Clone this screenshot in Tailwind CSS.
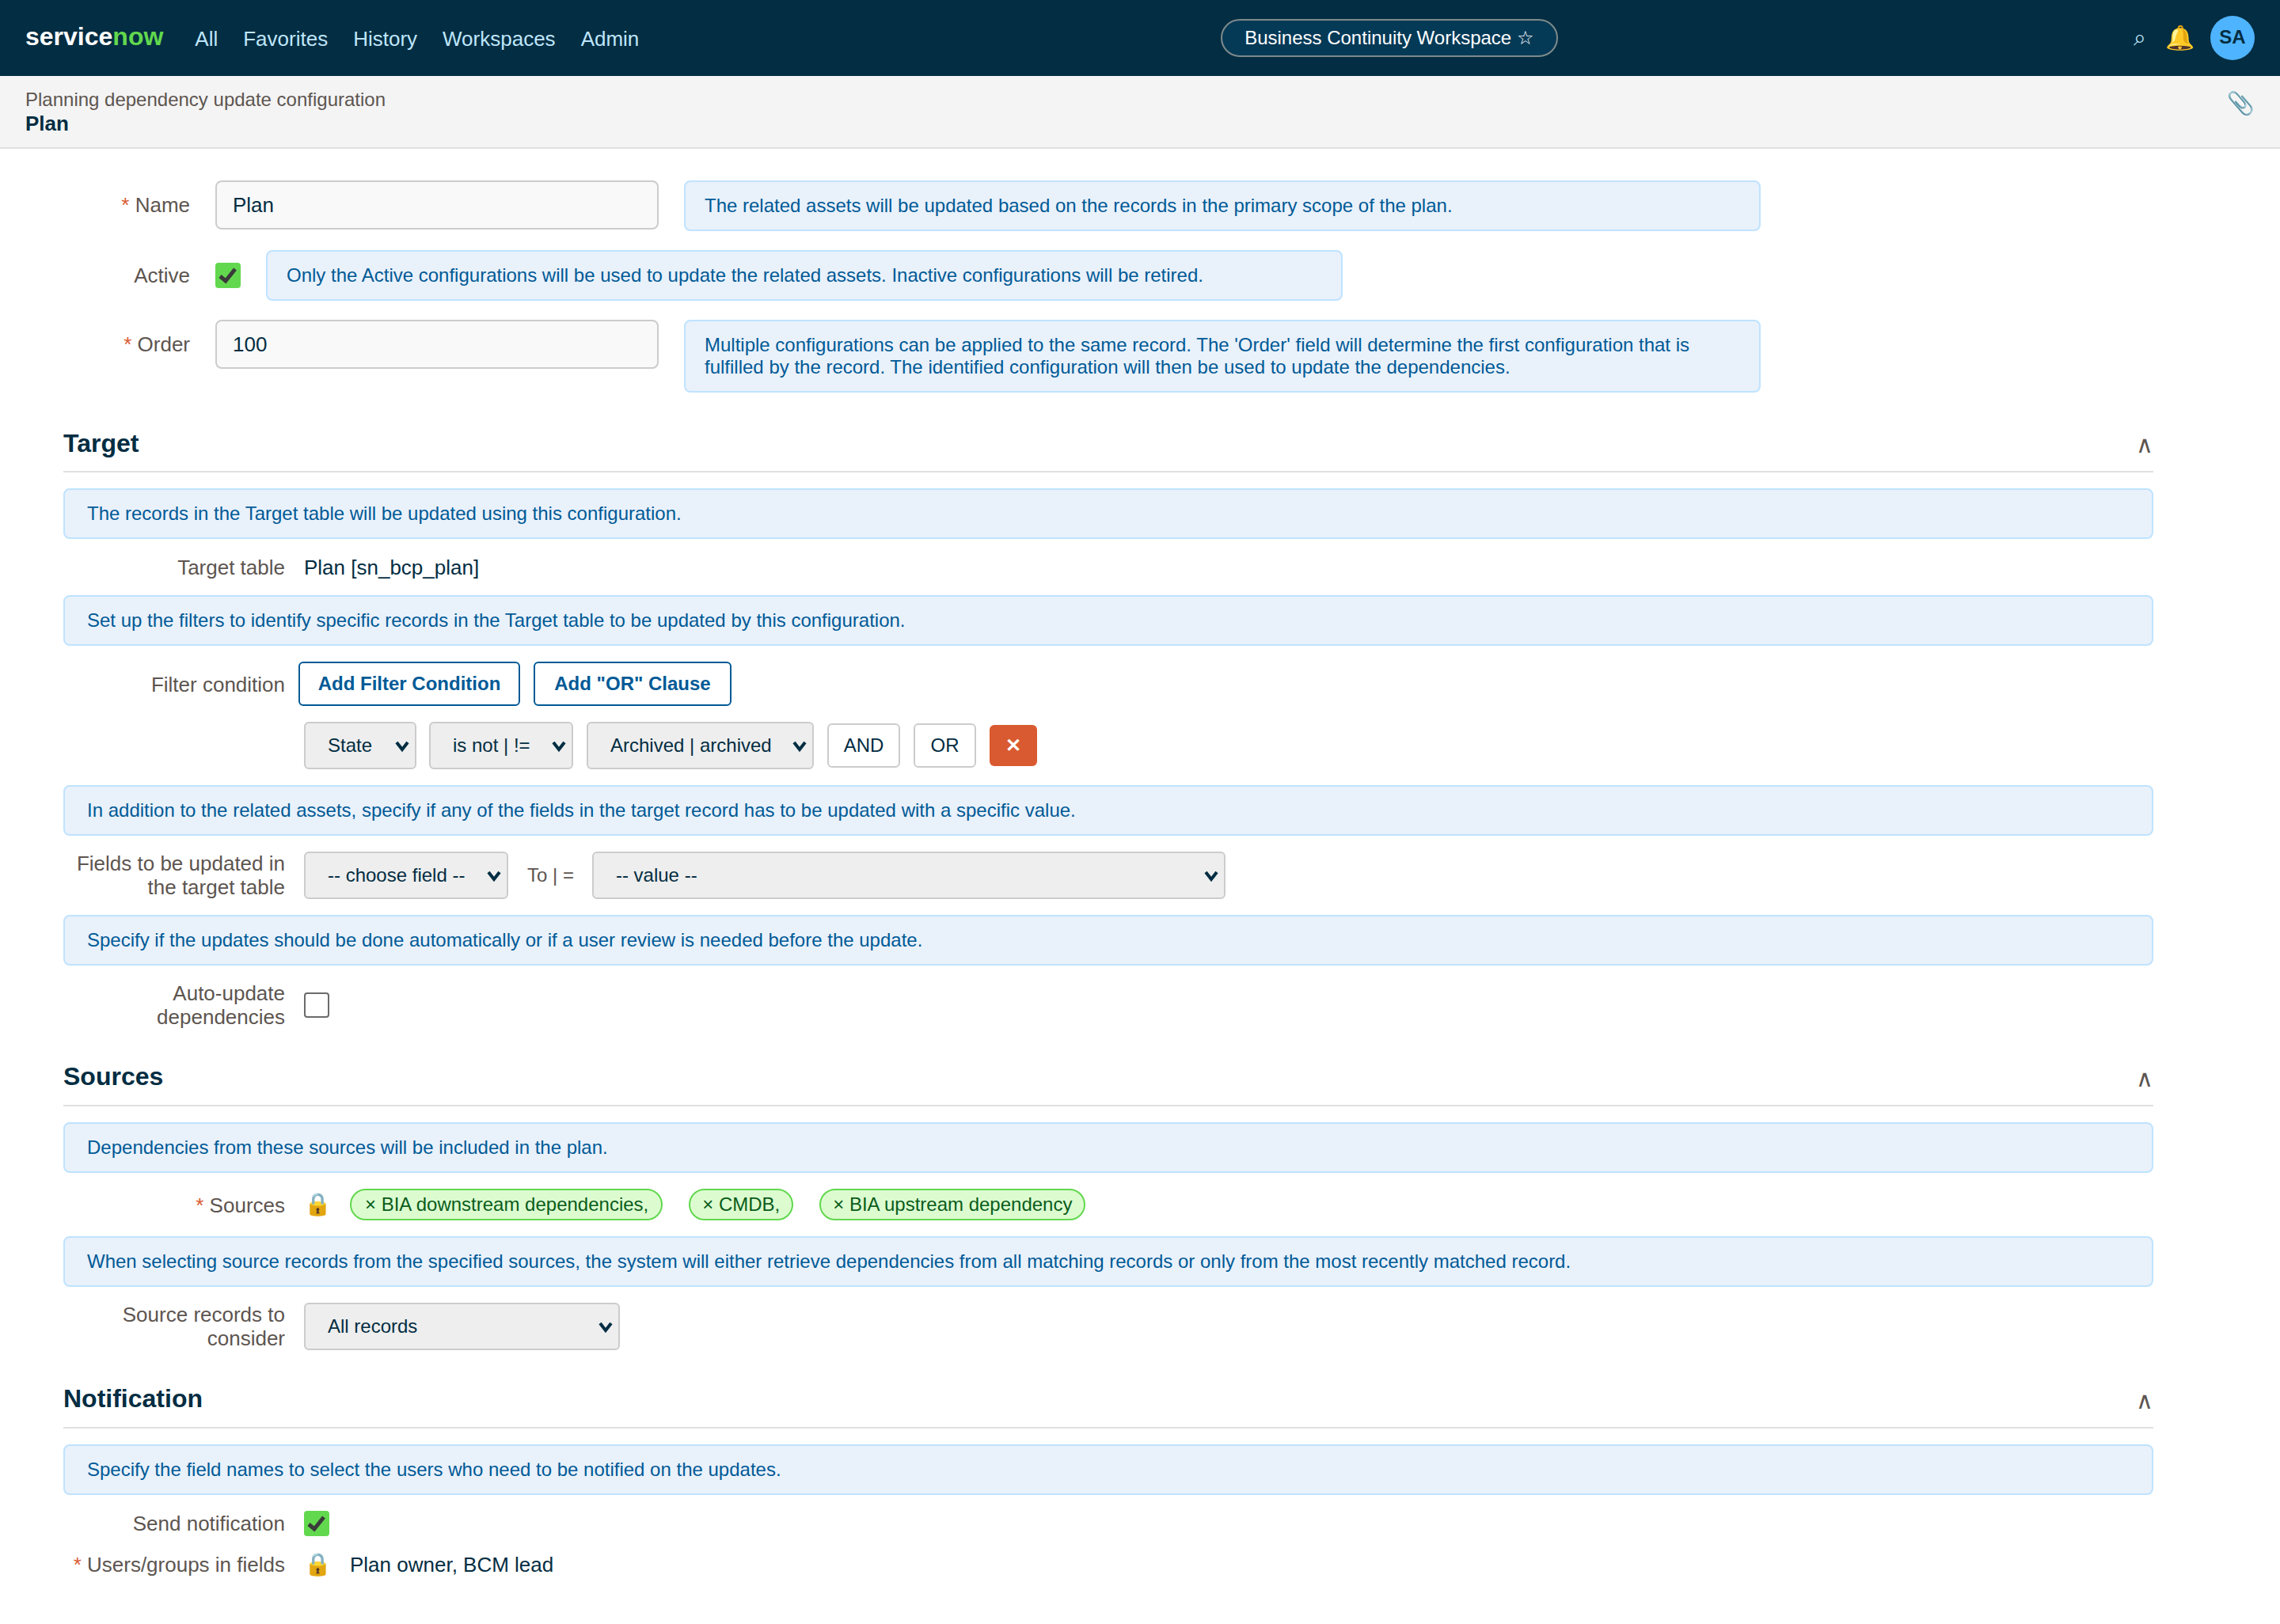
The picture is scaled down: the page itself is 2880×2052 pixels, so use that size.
<!DOCTYPE html>
<html lang="en">
  <head>
    <meta charset="UTF-8" />
    <title>Planning dependency update configuration</title>
    <script src="https://cdn.jsdelivr.net/npm/@tailwindcss/browser@4"></script>
  </head>
  <body class="bg-white font-['Liberation_Sans',sans-serif] text-[26px] leading-[30px] text-[#032d42]">
    <!-- Top bar -->
    <header class="h-[96px] bg-[#032d42] flex items-center pl-[32px] pr-[32px] relative">
      <div class="text-[32px] font-bold text-white mr-[40px] -mt-[4px]">service<span class="text-[#62d84e]">now</span></div>
      <nav class="flex gap-[32px] text-[26px] text-[#bee6fb] mt-[2px]">
        <a>All</a>
        <a>Favorites</a>
        <a>History</a>
        <a>Workspaces</a>
        <a>Admin</a>
      </nav>
      <div class="absolute left-[1542px] top-[24px] h-[48px] w-[426px] flex items-center justify-center rounded-full border-2 border-[#7f8a8c] bg-[#053a57] text-white text-[24px]">Business Continuity Workspace ☆</div>
      <div class="ml-auto flex items-center">
        <span class="text-[#bee6fb] text-[28px] mr-[24px]">⌕</span>
        <span class="text-[30px] mr-[20px]">🔔</span>
        <div class="w-[56px] h-[56px] rounded-full bg-[#4fb4ff] flex items-center justify-center font-bold text-[24px] pb-[2px]">SA</div>
      </div>
    </header>

    <!-- Record title -->
    <div class="h-[92px] bg-[#f4f4f4] border-b-2 border-[#e0e0e0] px-[32px] pt-[15px] flex justify-between">
      <div>
        <div class="text-[24px] text-[#5d5550]">Planning dependency update configuration</div>
        <div class="font-bold text-[26px]">Plan</div>
      </div>
      <span class="text-[28px] mt-[5px]">📎</span>
    </div>

    <main class="px-[80px] pt-[40px] w-[2800px]">
      <!-- Main fields -->
      <div class="flex flex-col gap-[24px]">
        <div class="flex items-start">
          <label class="w-[160px] text-right text-[#5d5550] mr-[32px] mt-[16px]"><span class="text-[#d95a30]">*</span> Name</label>
          <input value="Plan" class="w-[560px] h-[62px] px-[20px] bg-[#f9f9f9] border-2 border-[#cccccc] rounded-[8px]" />
          <div class="ml-[32px] w-[1360px] min-h-[64px] px-[24px] py-[16px] bg-[#e9f1fb] border-2 border-[#bfe3ff] rounded-[8px] text-[24px] leading-[28px] text-[#005a96]">The related assets will be updated based on the records in the primary scope of the plan.</div>
        </div>
        <div class="flex items-center">
          <label class="w-[160px] text-right text-[#5d5550] mr-[32px]">Active</label>
          <div class="w-[32px] h-[32px] bg-[#62d84e] rounded-[4px]">
            <svg class="w-[32px] h-[32px]" viewBox="0 0 32 32"><path d="M6 17 L13 23 L25 8" fill="none" stroke="#3a3a3a" stroke-width="5" /></svg>
          </div>
          <div class="ml-[32px] w-[1360px] min-h-[64px] px-[24px] py-[16px] bg-[#e9f1fb] border-2 border-[#bfe3ff] rounded-[8px] text-[24px] leading-[28px] text-[#005a96]">Only the Active configurations will be used to update the related assets. Inactive configurations will be retired.</div>
        </div>
        <div class="flex items-start">
          <label class="w-[160px] text-right text-[#5d5550] mr-[32px] mt-[16px]"><span class="text-[#d95a30]">*</span> Order</label>
          <input value="100" class="w-[560px] h-[62px] px-[20px] bg-[#f9f9f9] border-2 border-[#cccccc] rounded-[8px]" />
          <div class="ml-[32px] w-[1360px] px-[24px] py-[16px] bg-[#e9f1fb] border-2 border-[#bfe3ff] rounded-[8px] text-[24px] leading-[28px] text-[#005a96]">Multiple configurations can be applied to the same record. The 'Order' field will determine the first configuration that is fulfilled by the record. The identified configuration will then be used to update the dependencies.</div>
        </div>
      </div>

      <!-- Target -->
      <section class="mt-[40px]">
        <div class="h-[61px] border-b-2 border-[#e0e0e0] flex justify-between items-center pb-[11px]">
          <h2 class="font-bold text-[32px]">Target</h2>
          <span class="text-[#5d5550] text-[30px] mt-[3px]">∧</span>
        </div>
        <div class="mt-[20px] h-[64px] px-[28px] flex items-center bg-[#e9f1fb] border-2 border-[#bfe3ff] rounded-[8px] text-[24px] text-[#005a96]">The records in the Target table will be updated using this configuration.</div>
        <div class="flex items-center h-[71px]">
          <label class="w-[280px] text-right text-[#5d5550] mr-[24px]">Target table</label>
          <span>Plan [sn_bcp_plan]</span>
        </div>
        <div class="h-[64px] px-[28px] flex items-center bg-[#e9f1fb] border-2 border-[#bfe3ff] rounded-[8px] text-[24px] text-[#005a96]">Set up the filters to identify specific records in the Target table to be updated by this configuration.</div>
        <div class="flex items-center mt-[20px]">
          <label class="w-[280px] text-right text-[#5d5550] mr-[17px] mt-[2px]">Filter condition</label>
          <button class="h-[56px] w-[280px] bg-white border-2 border-[#005a96] rounded-[6px] font-bold text-[24px] text-[#005a96]">Add Filter Condition</button>
          <button class="h-[56px] w-[250px] ml-[17px] bg-white border-2 border-[#005a96] rounded-[6px] font-bold text-[24px] text-[#005a96]">Add "OR" Clause</button>
        </div>
        <div class="flex items-center mt-[20px] ml-[304px] text-[24px]">
          <div class="relative w-[142px]">
            <select class="appearance-none w-full h-[60px] pl-[28px] bg-[#eeeeee] border-2 border-[#cccccc] rounded-[6px]"><option>State</option></select>
            <svg class="absolute right-[8px] top-[24px] w-[20px] h-[14px] pointer-events-none" viewBox="0 0 20 14"><path d="M3 2 L10 11 L17 2" fill="none" stroke="#032d42" stroke-width="4" /></svg>
          </div>
          <div class="relative w-[182px] ml-[16px]">
            <select class="appearance-none w-full h-[60px] pl-[28px] bg-[#eeeeee] border-2 border-[#cccccc] rounded-[6px]"><option>is not | !=</option></select>
            <svg class="absolute right-[8px] top-[24px] w-[20px] h-[14px] pointer-events-none" viewBox="0 0 20 14"><path d="M3 2 L10 11 L17 2" fill="none" stroke="#032d42" stroke-width="4" /></svg>
          </div>
          <div class="relative w-[287px] ml-[17px]">
            <select class="appearance-none w-full h-[60px] pl-[28px] bg-[#eeeeee] border-2 border-[#cccccc] rounded-[6px]"><option>Archived | archived</option></select>
            <svg class="absolute right-[8px] top-[24px] w-[20px] h-[14px] pointer-events-none" viewBox="0 0 20 14"><path d="M3 2 L10 11 L17 2" fill="none" stroke="#032d42" stroke-width="4" /></svg>
          </div>
          <button class="h-[56px] w-[92px] ml-[17px] bg-white border-2 border-[#cccccc] rounded-[6px]">AND</button>
          <button class="h-[56px] w-[79px] ml-[17px] bg-white border-2 border-[#cccccc] rounded-[6px]">OR</button>
          <button class="h-[52px] w-[60px] ml-[17px] bg-[#d95a30] rounded-[6px] text-white font-bold">✕</button>
        </div>
        <div class="mt-[20px] h-[64px] px-[28px] flex items-center bg-[#e9f1fb] border-2 border-[#bfe3ff] rounded-[8px] text-[24px] text-[#005a96]">In addition to the related assets, specify if any of the fields in the target record has to be updated with a specific value.</div>
        <div class="flex items-center mt-[20px]">
          <label class="w-[280px] text-right text-[#5d5550] mr-[24px]">Fields to be updated in the target table</label>
          <div class="relative w-[258px] text-[24px]">
            <select class="appearance-none w-full h-[60px] pl-[28px] bg-[#eeeeee] border-2 border-[#cccccc] rounded-[6px]"><option>-- choose field --</option></select>
            <svg class="absolute right-[8px] top-[24px] w-[20px] h-[14px] pointer-events-none" viewBox="0 0 20 14"><path d="M3 2 L10 11 L17 2" fill="none" stroke="#032d42" stroke-width="4" /></svg>
          </div>
          <span class="text-[24px] text-[#5d5550] ml-[24px] mr-[23px]">To | =</span>
          <div class="relative w-[800px] text-[24px]">
            <select class="appearance-none w-full h-[60px] pl-[28px] bg-[#eeeeee] border-2 border-[#cccccc] rounded-[6px]"><option>-- value --</option></select>
            <svg class="absolute right-[8px] top-[24px] w-[20px] h-[14px] pointer-events-none" viewBox="0 0 20 14"><path d="M3 2 L10 11 L17 2" fill="none" stroke="#032d42" stroke-width="4" /></svg>
          </div>
        </div>
        <div class="mt-[20px] h-[64px] px-[28px] flex items-center bg-[#e9f1fb] border-2 border-[#bfe3ff] rounded-[8px] text-[24px] text-[#005a96]">Specify if the updates should be done automatically or if a user review is needed before the update.</div>
        <div class="flex items-center mt-[20px]">
          <label class="w-[280px] text-right text-[#5d5550] mr-[24px]">Auto-update dependencies</label>
          <div class="w-[32px] h-[32px] bg-white border-2 border-[#6b6b6b] rounded-[4px]"></div>
        </div>
      </section>

      <!-- Sources -->
      <section class="mt-[37px]">
        <div class="h-[61px] border-b-2 border-[#e0e0e0] flex justify-between items-center pb-[13px]">
          <h2 class="font-bold text-[32px]">Sources</h2>
          <span class="text-[#5d5550] text-[30px] mt-[5px]">∧</span>
        </div>
        <div class="mt-[20px] h-[64px] px-[28px] flex items-center bg-[#e9f1fb] border-2 border-[#bfe3ff] rounded-[8px] text-[24px] text-[#005a96]">Dependencies from these sources will be included in the plan.</div>
        <div class="flex items-center mt-[20px]">
          <label class="w-[280px] text-right text-[#5d5550] mr-[24px] mt-[2px]"><span class="text-[#d95a30]">*</span> Sources</label>
          <span class="w-[32px] mr-[26px] text-[28px]">🔒</span>
          <span class="h-[40px] pl-[17px] pr-[16px] flex items-center rounded-full border-2 border-[#62d84e] bg-[#dcfcd0] text-[24px] text-[#0a5c1a]">× BIA downstream dependencies,</span>
          <span class="h-[40px] px-[15px] ml-[33px] flex items-center rounded-full border-2 border-[#62d84e] bg-[#dcfcd0] text-[24px] text-[#0a5c1a]">× CMDB,</span>
          <span class="h-[40px] px-[15px] ml-[33px] flex items-center rounded-full border-2 border-[#62d84e] bg-[#dcfcd0] text-[24px] text-[#0a5c1a]">× BIA upstream dependency</span>
        </div>
        <div class="mt-[20px] h-[64px] px-[28px] flex items-center bg-[#e9f1fb] border-2 border-[#bfe3ff] rounded-[8px] text-[24px] text-[#005a96]">When selecting source records from the specified sources, the system will either retrieve dependencies from all matching records or only from the most recently matched record.</div>
        <div class="flex items-center mt-[20px]">
          <label class="w-[280px] text-right text-[#5d5550] mr-[24px]">Source records to consider</label>
          <div class="relative w-[399px] text-[24px]">
            <select class="appearance-none w-full h-[60px] pl-[28px] bg-[#eeeeee] border-2 border-[#cccccc] rounded-[6px]"><option>All records</option></select>
            <svg class="absolute right-[8px] top-[24px] w-[20px] h-[14px] pointer-events-none" viewBox="0 0 20 14"><path d="M3 2 L10 11 L17 2" fill="none" stroke="#032d42" stroke-width="4" /></svg>
          </div>
        </div>
      </section>

      <!-- Notification -->
      <section class="mt-[38px]">
        <div class="h-[61px] border-b-2 border-[#e0e0e0] flex justify-between items-center pb-[13px]">
          <h2 class="font-bold text-[32px]">Notification</h2>
          <span class="text-[#5d5550] text-[30px] mt-[5px]">∧</span>
        </div>
        <div class="mt-[20px] h-[64px] px-[28px] flex items-center bg-[#e9f1fb] border-2 border-[#bfe3ff] rounded-[8px] text-[24px] text-[#005a96]">Specify the field names to select the users who need to be notified on the updates.</div>
        <div class="flex items-center mt-[20px]">
          <label class="w-[280px] text-right text-[#5d5550] mr-[24px]">Send notification</label>
          <div class="w-[32px] h-[32px] bg-[#62d84e] rounded-[4px]">
            <svg class="w-[32px] h-[32px]" viewBox="0 0 32 32"><path d="M6 17 L13 23 L25 8" fill="none" stroke="#3a3a3a" stroke-width="5" /></svg>
          </div>
        </div>
        <div class="flex items-center mt-[21px]">
          <label class="w-[280px] text-right text-[#5d5550] mr-[24px]"><span class="text-[#d95a30]">*</span> Users/groups in fields</label>
          <span class="w-[32px] mr-[26px] text-[28px]">🔒</span>
          <span>Plan owner, BCM lead</span>
        </div>
      </section>
    </main>
  </body>
</html>
